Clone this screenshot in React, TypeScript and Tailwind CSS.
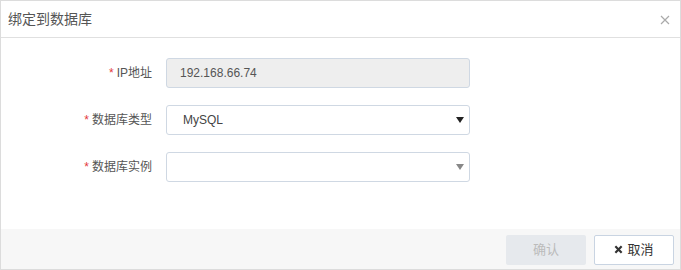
import React from "react";

const font = { fontFamily: '"Liberation Sans", Arial, "Noto Sans CJK SC", sans-serif' };

function Label({ text }: { text: string }) {
  return (
    <div className="w-[151px] shrink-0 text-right text-[12px] text-[#555]">
      <span className="text-[#e4393c] mr-[3px]">*</span>
      {text}
    </div>
  );
}

export default function App() {
  return (
    <div style={font} className="w-[681px] h-[270px] border border-[#dcdcdc] bg-white flex flex-col">
      <div className="h-[37px] shrink-0 border-b border-[#e0e0e0] flex items-center justify-between pl-[7px] pr-[10px]">
        <span className="text-[14px] text-[#555]">绑定到数据库</span>
        <svg width="10" height="10" viewBox="0 0 10 10" className="mt-[2px]">
          <path d="M1 1L9 9M9 1L1 9" stroke="#aaa" strokeWidth="1.2" />
        </svg>
      </div>
      <div className="flex-1 flex flex-col gap-[17px] pt-[20px]">
        <div className="flex items-center gap-[14px]">
          <Label text="IP地址" />
          <div className="w-[304px] h-[30px] rounded-[3px] border border-[#cfd8e3] bg-[#eeeeee] flex items-center pl-[13px] text-[12px] text-[#555]">
            192.168.66.74
          </div>
        </div>
        <div className="flex items-center gap-[14px]">
          <Label text="数据库类型" />
          <div className="w-[304px] h-[30px] rounded-[3px] border border-[#cfd8e3] bg-white flex items-center justify-between pl-[16px] pr-[4px] text-[12px] text-[#444]">
            <span>MySQL</span>
            <svg width="8" height="6" viewBox="0 0 8 6" className="mr-[1px]"><path d="M0 0H8L4 6Z" fill="#222" /></svg>
          </div>
        </div>
        <div className="flex items-center gap-[14px]">
          <Label text="数据库实例" />
          <div className="w-[304px] h-[30px] rounded-[3px] border border-[#cfd8e3] bg-white flex items-center justify-end pr-[4px]">
            <svg width="8" height="6" viewBox="0 0 8 6" className="mr-[1px]"><path d="M0 0H8L4 6Z" fill="#888" /></svg>
          </div>
        </div>
      </div>
      <div className="h-[40px] shrink-0 bg-[#f7f7f7] flex items-center justify-end gap-[8px] pr-[6px] pt-[1px]">
        <div className="w-[80px] h-[30px] rounded-[2px] bg-[#e6e9ed] flex items-center justify-center text-[13px] text-[#bbb]">
          确认
        </div>
        <div className="w-[80px] h-[30px] rounded-[2px] border border-[#c9d4e2] bg-white flex items-center justify-center text-[13px] text-[#333] gap-[4px]">
          <svg width="9" height="9" viewBox="0 0 10 10"><path d="M1.5 1.5L8.5 8.5M8.5 1.5L1.5 8.5" stroke="#333" strokeWidth="2.4" /></svg>
          <span>取消</span>
        </div>
      </div>
    </div>
  );
}
